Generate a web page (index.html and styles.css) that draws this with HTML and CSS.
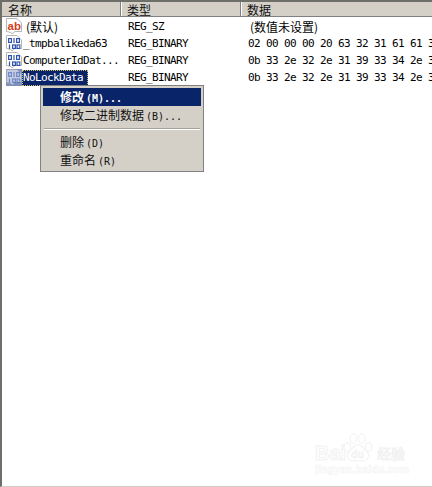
FILE: index.html
```html
<!DOCTYPE html>
<html lang="zh-CN">
<head>
    <meta charset="UTF-8">
    <title>注册表编辑器</title>
    <link rel="stylesheet" href="styles.css">
</head>
<body>
    <div class="frame">
        <div class="columns">
            <div class="col-head col-name">名称</div>
            <div class="col-head col-type">类型</div>
            <div class="col-head col-data">数据</div>
        </div>

        <div class="rows">
            <div class="row">
                <div class="cell-name">
                    <svg class="icon" viewBox="0 0 16 17"><use href="#doc"/><text x="1.500" y="11.500" class="ab">ab</text></svg>
                    <span class="label label-cn">(默认)</span>
                </div>
                <div class="cell-type">REG_SZ</div>
                <div class="cell-data cell-cn">(数值未设置)</div>
            </div>
            <div class="row">
                <div class="cell-name">
                    <svg class="icon" viewBox="0 0 16 17"><use href="#doc"/><use href="#bits"/></svg>
                    <span class="label">_tmpbalikeda63</span>
                </div>
                <div class="cell-type">REG_BINARY</div>
                <div class="cell-data">02 00 00 00 20 63 32 31 61 61 31</div>
            </div>
            <div class="row">
                <div class="cell-name">
                    <svg class="icon" viewBox="0 0 16 17"><use href="#doc"/><use href="#bits"/></svg>
                    <span class="label">ComputerIdDat...</span>
                </div>
                <div class="cell-type">REG_BINARY</div>
                <div class="cell-data">0b 33 2e 32 2e 31 39 33 34 2e 31</div>
            </div>
            <div class="row">
                <div class="cell-name">
                    <svg class="icon icon-selected" viewBox="0 0 16 17"><use href="#doc"/><use href="#bits"/></svg>
                    <span class="label label-selected">NoLockData</span>
                </div>
                <div class="cell-type">REG_BINARY</div>
                <div class="cell-data">0b 33 2e 32 2e 31 39 33 34 2e 31</div>
            </div>
        </div>
    </div>

    <div class="menu">
        <div class="menu-item menu-default">修改<span class="key">(M)...</span></div>
        <div class="menu-item">修改二进制数据<span class="key">(B)...</span></div>
        <div class="menu-sep"></div>
        <div class="menu-item">删除<span class="key">(D)</span></div>
        <div class="menu-item">重命名<span class="key">(R)</span></div>
    </div>

    <div class="watermark">
        <svg class="wm-paw" viewBox="0 0 30 30">
            <ellipse cx="5" cy="14" rx="3" ry="4"/>
            <ellipse cx="10.500" cy="6" rx="3" ry="4.500"/>
            <ellipse cx="18.500" cy="6" rx="3" ry="4.500"/>
            <ellipse cx="25" cy="14" rx="3" ry="4"/>
            <path d="M15 12C19 12 20 16 23 18C27 21 24 28 19 27C16 26.500 14 26.500 11 27C6 28 3 21 7 18C10 16 11 12 15 12Z"/>
            <text x="8.500" y="24" class="wm-du">du</text>
        </svg>
        <div class="wm-logo">
            <span class="wm-bai">Bai</span>
            <span class="wm-cn">经验</span>
        </div>
        <div class="wm-url">jingyan.baidu.com</div>
    </div>

    <svg class="defs" width="0" height="0">
        <defs>
            <path id="doc" d="M.5 .5H11L15.500 5V13.500H9L6 16 5 14.500 .5 13.500Z" fill="#fff" stroke="#b4b4b4"/>
            <g id="bits" fill="none" stroke="#2f55b0" stroke-width="1.200">
                <rect x="2.600" y="3.600" width="2.800" height="3.800"/>
                <path d="M8 3V8"/>
                <rect x="10.600" y="3.600" width="2.800" height="3.800"/>
                <path d="M3.500 9.500V14"/>
                <rect x="6.600" y="10" width="2.800" height="3.400"/>
                <rect x="11" y="10" width="2.800" height="3.400"/>
            </g>
        </defs>
    </svg>
</body>
</html>
```

FILE: styles.css
```css
html, body { margin: 0; padding: 0; }
body {
    position: relative;
    width: 432px; height: 487px; overflow: hidden;
    background: #fff; color: #000;
    font-family: "DejaVu Sans Mono", "Noto Sans CJK SC", monospace;
    font-size: 11px; letter-spacing: -0.62px;
}
.frame {
    height: 484px;
    border-top: 2px solid #6f6f6a;
    border-left: 2px solid #6f6f6a;
    border-bottom: 1px solid #d4d0c8;
}
.columns {
    display: flex; height: 14px;
    background: #d4d0c8;
    border-bottom: 1px solid #808080;
}
.col-head {
    font-family: "Noto Sans CJK SC", sans-serif;
    font-size: 12px; line-height: 15px; letter-spacing: 0; color: #111;
    border-right: 1px solid #808080;
    box-shadow: 1px 0 0 #fff;
    box-sizing: border-box;
}
.col-name { width: 119px; padding-left: 6px; }
.col-type { width: 120px; padding-left: 6px; }
.col-data { flex: 1; padding-left: 6px; border-right: none; box-shadow: none; }

.rows { padding-top: 1px; }
.row { display: flex; height: 17px; align-items: center; }
.cell-name { width: 126px; display: flex; align-items: center; padding-left: 4px; box-sizing: border-box; }
.cell-type { width: 120px; }
.cell-data { flex: 1; white-space: nowrap; overflow: hidden; }
.cell-cn, .label-cn {
    font-family: "Noto Sans CJK SC", sans-serif;
    font-size: 12px; letter-spacing: 0;
}
.cell-cn { padding-left: 2px; }
.label.label-cn { padding-left: 4px; }

.icon { width: 16px; height: 17px; flex: none; }
.icon-selected { background: #7f8fbd; }
.icon-selected use { opacity: .55; }
.ab { font: bold 11.500px "Liberation Sans", sans-serif; letter-spacing: 0; fill: #d2401c; }
.label { height: 16px; line-height: 16px; padding: 0 1px; white-space: nowrap; }
.label-selected {
    padding-right: 5px;
    background: #0a246a; color: #fff;
    outline: 1px dotted #d4c060; outline-offset: -1px;
}

.menu {
    position: absolute; left: 40px; top: 85px;
    width: 164px; box-sizing: border-box;
    padding: 2px;
    background: #d4d0c8;
    border: 1px solid #808080;
    font-family: "Noto Sans CJK SC", sans-serif;
    font-size: 12px; letter-spacing: 0; color: #111;
}
.menu-item { height: 18px; line-height: 18px; padding-left: 17px; white-space: nowrap; }
.menu-default { background: #0a246a; color: #fff; font-weight: bold; }
.menu-sep { margin: 4px 1px 3px; border-top: 1px solid #a6a39c; border-bottom: 1px solid #fff; }
.key {
    margin-left: 2px;
    font-family: "DejaVu Sans Mono", monospace;
    font-size: 10px;
}

.watermark {
    position: absolute; left: 315px; top: 432px;
    width: 90px; height: 42px;
    color: #fff;
    font-family: "Liberation Sans", sans-serif;
    letter-spacing: 0;
    -webkit-text-stroke: 1px #f2f2f2;
}
.wm-logo { display: flex; justify-content: space-between; padding-top: 11px; align-items: center; line-height: 20px; }
.wm-bai { font-size: 20px; font-weight: bold; }
.wm-cn { font-family: "Noto Sans CJK SC", sans-serif; font-size: 14px; }
.wm-paw {
    position: absolute; left: 27px; top: 0;
    width: 32px; height: 32px;
    fill: #fff; stroke: #f2f2f2;
}
.wm-du { font: bold 10px "Liberation Sans", sans-serif; stroke: #ececec; stroke-width: .5px; }
.wm-url { font-size: 10px; font-weight: bold; letter-spacing: .4px; margin-top: 1px; -webkit-text-stroke: .5px #f2f2f2; }
.defs { position: absolute; }
```
